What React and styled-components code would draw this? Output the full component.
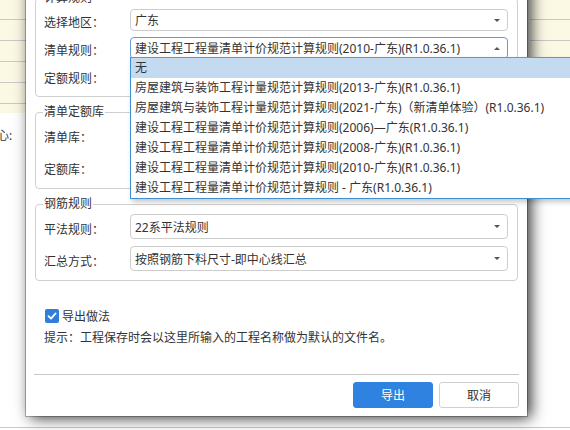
import React from 'react';
import styled, { createGlobalStyle } from 'styled-components';

const GlobalStyle = createGlobalStyle`
  html, body {
    margin: 0;
    padding: 0;
    overflow: hidden;
    background: #fff;
  }
  body {
    font-family: "Noto Sans", "Noto Sans CJK SC", sans-serif;
    font-size: 12px;
    color: #333;
  }
`;

const ruleOptions = [
  '无',
  '房屋建筑与装饰工程计量规范计算规则(2013-广东)(R1.0.36.1)',
  '房屋建筑与装饰工程计量规范计算规则(2021-广东)（新清单体验）(R1.0.36.1)',
  '建设工程工程量清单计价规范计算规则(2006)—广东(R1.0.36.1)',
  '建设工程工程量清单计价规范计算规则(2008-广东)(R1.0.36.1)',
  '建设工程工程量清单计价规范计算规则(2010-广东)(R1.0.36.1)',
  '建设工程工程量清单计价规范计算规则 - 广东(R1.0.36.1)',
];

const CheckIcon = () => (
  <svg width="10" height="10" viewBox="0 0 10 10">
    <path d="M1.5 5.2 L4 7.6 L8.6 2.4" fill="none" stroke="#fff" strokeWidth="1.8" strokeLinecap="round" strokeLinejoin="round" />
  </svg>
);

const Select = ({ value, height, open, children }) => (
  <SelectBox height={height} open={open}>
    <SelectValue>{value}</SelectValue>
    <Caret up={open} />
    {children}
  </SelectBox>
);

const Field = ({ label, height, ...rest }) => (
  <Row height={height}>
    <Label>{label}</Label>
    <Select height={height} {...rest} />
  </Row>
);

const App = () => {
  return (
    <Screen>
      <GlobalStyle />
      <Backdrop>
        <LeftPane>
          <Sheet height={113}>
            {[19, 20, 20, 20, 20].map((h, i) => <SheetRow key={i} height={h} />)}
          </Sheet>
          <CellText>中心:</CellText>
        </LeftPane>
        <div />
        <RightPane>
          <Sheet height={57}>
            <SheetRow height={19} />
            <SheetRow height={20} />
          </Sheet>
        </RightPane>
        <BottomRule />
      </Backdrop>

      <Dialog>
        <Group top={2}>
          <Legend>计算规则</Legend>
          <Rows gap={6}>
            <Field label="选择地区：" height={22} value="广东" />
            <Field
              label="清单规则："
              height={22}
              value="建设工程工程量清单计价规范计算规则(2010-广东)(R1.0.36.1)"
              open
            >
              <Dropdown>
                {ruleOptions.map((opt, i) => (
                  <Option key={opt} active={i === 0}>{opt}</Option>
                ))}
              </Dropdown>
            </Field>
            <Field label="定额规则：" height={22} value="" />
          </Rows>
        </Group>

        <Group top={1}>
          <Legend>清单定额库</Legend>
          <Rows gap={7}>
            <Field label="清单库：" height={25} value="" />
            <Field label="定额库：" height={25} value="" />
          </Rows>
        </Group>

        <Group top={1}>
          <Legend>钢筋规则</Legend>
          <Rows gap={7}>
            <Field label="平法规则：" height={25} value="22系平法规则" />
            <Field label="汇总方式：" height={25} value="按照钢筋下料尺寸-即中心线汇总" />
          </Rows>
        </Group>

        <Options>
          <CheckRow>
            <CheckBox><CheckIcon /></CheckBox>
            导出做法
          </CheckRow>
          <Hint>提示：工程保存时会以这里所输入的工程名称做为默认的文件名。</Hint>
        </Options>

        <Footer>
          <Button primary>导出</Button>
          <Button>取消</Button>
        </Footer>
      </Dialog>
    </Screen>
  );
};

export default App;

const Screen = styled.div`
  position: relative;
  width: 570px;
  height: 430px;
  overflow: hidden;
`;

const Backdrop = styled.div`
  height: 100%;
  display: grid;
  grid-template-columns: 40px 1fr 40px;
  grid-template-rows: 1fr 3px;
`;

const LeftPane = styled.div`
  display: flex;
  flex-direction: column;
  overflow: hidden;
`;

const RightPane = styled.div`
  display: flex;
  flex-direction: column;
`;

const Sheet = styled.div`
  height: ${({ height }) => height}px;
  background: #fbf8e4;
`;

const SheetRow = styled.div`
  height: ${({ height }) => height}px;
  border-bottom: 1px solid #c9c9c9;
`;

const CellText = styled.div`
  margin: 14px 0 0 -15px;
  line-height: 18px;
  white-space: nowrap;
`;

const BottomRule = styled.div`
  grid-column: 1 / -1;
  border-top: 1px solid #c8c8c8;
`;

const Dialog = styled.div`
  position: absolute;
  left: 26px;
  top: -20px;
  width: 501px;
  height: 436px;
  box-sizing: border-box;
  padding: 9px 8px 0;
  display: flex;
  flex-direction: column;
  background: #fff;
  box-shadow: 0 0 0 1px rgba(0, 0, 0, 0.25), 4px 2px 14px rgba(0, 0, 0, 0.8);
  z-index: 1;
`;

const Group = styled.fieldset`
  margin: 0 1px 6px;
  padding: ${({ top }) => top}px 9px 9px 8px;
  border: 1px solid #d0d0d0;
  border-radius: 4px;
  min-width: 0;
`;

const Legend = styled.legend`
  margin-left: -1px;
  padding: 0 1px;
  line-height: 18px;
  color: #333;
`;

const Rows = styled.div`
  display: flex;
  flex-direction: column;
  gap: ${({ gap }) => gap}px;
`;

const Row = styled.div`
  display: flex;
  align-items: center;
  height: ${({ height }) => height}px;
`;

const Label = styled.div`
  width: 86px;
  flex: none;
  padding-top: 4px;
  white-space: nowrap;
`;

const SelectBox = styled.div`
  position: relative;
  flex: 1;
  height: ${({ height }) => height}px;
  box-sizing: border-box;
  display: flex;
  align-items: center;
  padding: 0 7px 0 4px;
  border: 1px solid ${({ open }) => (open ? '#6a9ad6' : '#cdcdcd')};
  border-radius: 4px;
  background: #fff;
`;

const SelectValue = styled.span`
  flex: 1;
  white-space: nowrap;
  overflow: hidden;
`;

const Caret = styled.span`
  width: 0;
  height: 0;
  border-left: 3px solid transparent;
  border-right: 3px solid transparent;
  ${({ up }) => (up ? 'border-bottom: 3px solid #555;' : 'border-top: 3px solid #555;')}
`;

const Dropdown = styled.div`
  position: absolute;
  left: -1px;
  top: calc(100% - 1px);
  width: 460px;
  box-sizing: border-box;
  background: #fff;
  border: 1px solid #3e8fd3;
  border-top-color: #4aa3c8;
  box-shadow: 2px 3px 5px rgba(0, 0, 0, 0.22);
  z-index: 5;
`;

const Option = styled.div`
  height: 20px;
  line-height: 20px;
  padding-left: 4px;
  white-space: nowrap;
  color: #333;
  background: ${({ active }) => (active ? '#c3daf0' : 'transparent')};
`;

const Options = styled.div`
  margin-top: 20px;
  display: flex;
  flex-direction: column;
  gap: 4px;
`;

const CheckRow = styled.label`
  display: flex;
  align-items: center;
  gap: 3px;
  height: 18px;
  padding-left: 11px;
`;

const CheckBox = styled.span`
  width: 14px;
  height: 14px;
  border-radius: 2px;
  background: #2f7fd8;
  display: flex;
  align-items: center;
  justify-content: center;
`;

const Hint = styled.div`
  line-height: 18px;
  padding-left: 10px;
`;

const Footer = styled.div`
  margin-top: auto;
  display: flex;
  justify-content: flex-end;
  gap: 6px;
  padding: 7px 0 8px;
  border-top: 1px solid #c8c8c8;
`;

const Button = styled.button`
  width: 80px;
  height: 26px;
  box-sizing: border-box;
  border-radius: 3px;
  font-family: inherit;
  font-size: 12px;
  cursor: pointer;
  border: 1px solid ${({ primary }) => (primary ? '#2f82e0' : '#cfcfcf')};
  background: ${({ primary }) => (primary ? '#2f82e0' : '#fff')};
  color: ${({ primary }) => (primary ? '#fff' : '#333')};
`;
